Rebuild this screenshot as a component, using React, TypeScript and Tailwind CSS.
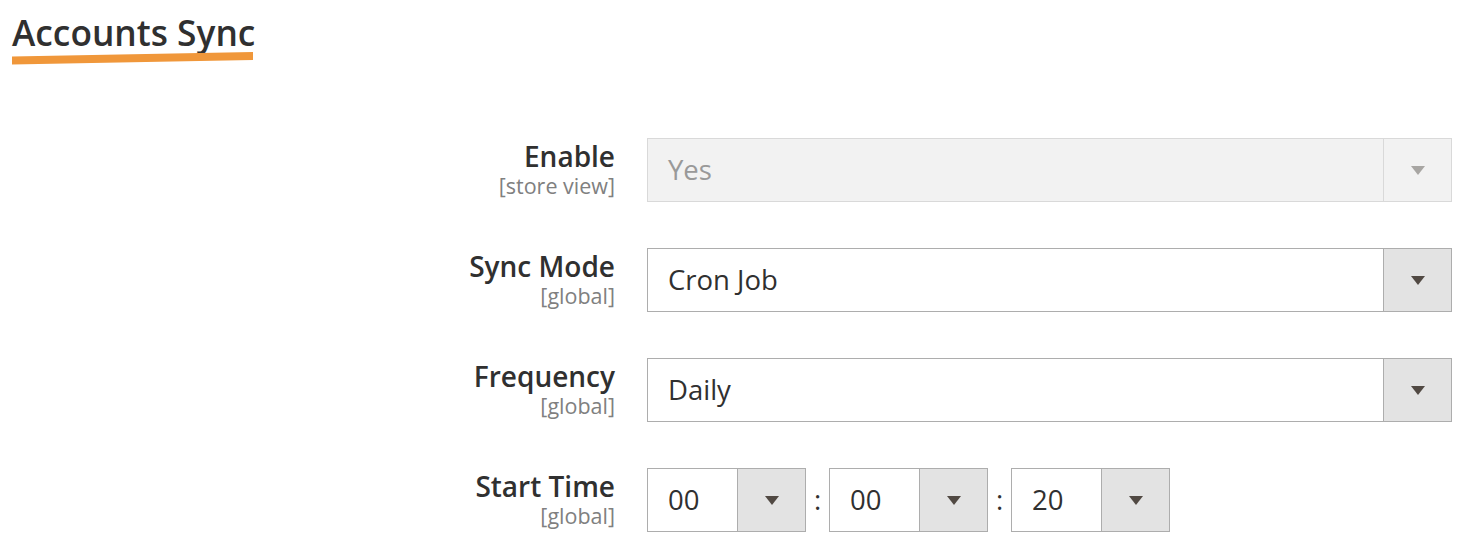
const Arrow = ({ disabled }: { disabled?: boolean }) => (
  <svg width="14" height="9" viewBox="0 0 14 9" className="block">
    <polygon points="0,0 14,0 7,9" fill={disabled ? '#a8a6a3' : '#514943'} />
  </svg>
);

type SelectProps = {
  value: string;
  disabled?: boolean;
  width: string;
};

const Select = ({ value, disabled, width }: SelectProps) => (
  <div
    className={`flex h-[64px] ${width} border ${
      disabled ? 'border-[#d9d9d9] bg-[#f2f2f2]' : 'border-[#adadad] bg-white'
    }`}
  >
    <div
      className={`flex flex-1 items-center pl-[20px] text-[27.5px] ${
        disabled ? 'text-[#999999]' : 'text-[#303030]'
      }`}
    >
      {value}
    </div>
    <div
      className={`flex w-[68px] items-center justify-center border-l ${
        disabled ? 'border-[#d9d9d9] bg-[#f2f2f2]' : 'border-[#adadad] bg-[#e3e3e3]'
      }`}
    >
      <Arrow disabled={disabled} />
    </div>
  </div>
);

const Label = ({ title, scope }: { title: string; scope: string }) => (
  <div className="w-[615px] shrink-0 pt-[2px] text-right">
    <div className="text-[28px] font-semibold leading-[32px] text-[#303030]">{title}</div>
    <div className="text-[21.5px] leading-[28px] text-[#808080]">{scope}</div>
  </div>
);

export default function App() {
  return (
    <div
      className="h-[546px] w-[1482px] bg-white"
      style={{ fontFamily: '"Open Sans", "Liberation Sans", sans-serif' }}
    >
      <div className="pl-[12px] pt-[10px]">
        <h1 className="text-[35.3px] font-semibold leading-[44px] text-[#303030]">Accounts Sync</h1>
        <svg width="244" height="14" viewBox="0 0 244 14" className="block mt-[-2px]">
          <polygon points="0,4.5 241,0 241,8 0,12.5" fill="#f0973a" />
        </svg>
      </div>

      <div className="mt-[72px] flex flex-col gap-[46px]">
        <div className="flex gap-[32px]">
          <Label title="Enable" scope="[store view]" />
          <Select value="Yes" disabled width="w-[805px]" />
        </div>
        <div className="flex gap-[32px]">
          <Label title="Sync Mode" scope="[global]" />
          <Select value="Cron Job" width="w-[805px]" />
        </div>
        <div className="flex gap-[32px]">
          <Label title="Frequency" scope="[global]" />
          <Select value="Daily" width="w-[805px]" />
        </div>
        <div className="flex gap-[32px]">
          <Label title="Start Time" scope="[global]" />
          <div className="flex items-center">
            <Select value="00" width="w-[159px]" />
            <span className="w-[23px] text-center text-[27.5px] text-[#303030]">:</span>
            <Select value="00" width="w-[159px]" />
            <span className="w-[23px] text-center text-[27.5px] text-[#303030]">:</span>
            <Select value="20" width="w-[159px]" />
          </div>
        </div>
      </div>
    </div>
  );
}
